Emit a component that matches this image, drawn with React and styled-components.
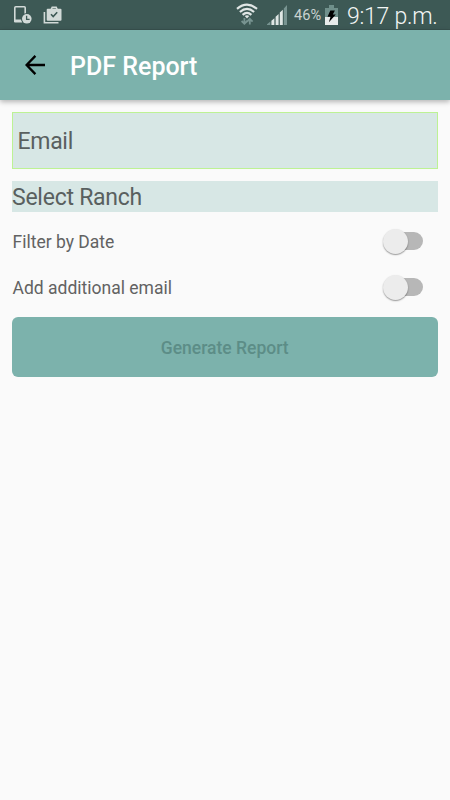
import React, { useState } from "react";
import styled, { createGlobalStyle } from "styled-components";

export default function App() {
  const [filterByDate, setFilterByDate] = useState(false);
  const [additionalEmail, setAdditionalEmail] = useState(false);

  return (
    <>
      <GlobalStyle />
      <Screen>
        <StatusBar />
        <AppBar>
          <BackButton aria-label="Back">
            <svg width="20" height="20" viewBox="0 0 20 20" fill="none" stroke="#000" strokeWidth="2.3">
              <path d="M20 10H2M10.4 0.9L1.6 10l8.8 9.1" />
            </svg>
          </BackButton>
          <Title>PDF Report</Title>
        </AppBar>
        <Form>
          <EmailInput placeholder="Email" />
          <Picker>Select Ranch</Picker>
          <SwitchRow label="Filter by Date" on={filterByDate} onToggle={() => setFilterByDate(!filterByDate)} />
          <SwitchRow label="Add additional email" on={additionalEmail} onToggle={() => setAdditionalEmail(!additionalEmail)} />
          <SubmitButton disabled>Generate Report</SubmitButton>
        </Form>
      </Screen>
    </>
  );
}

function StatusBar() {
  return (
    <StatusContainer>
      <Notifications>
        {/* device with clock */}
        <svg width="19" height="19" viewBox="0 0 19 19">
          <path d="M12.2 8V1.8q0-1-1-1H2.8q-1 0-1 1V16" fill="none" stroke="#d2dad8" strokeWidth="1.6" />
          <path d="M1 13.6h7.4l1 3H2q-1 0-1-1z" fill="#d2dad8" />
          <circle cx="13.8" cy="12.8" r="5.7" fill="#3d5955" />
          <circle cx="13.8" cy="12.8" r="4.8" fill="#d2dad8" />
          <path d="M13.6 9.8v3.5h3" fill="none" stroke="#3d5955" strokeWidth="1.3" />
        </svg>
        {/* briefcase with check */}
        <svg width="19" height="18" viewBox="0 0 19 18">
          <path d="M1.4 6v10.8H15.5" fill="none" stroke="#d2dad8" strokeWidth="1.6" />
          <path d="M8.2 3.5l1-2.1h4l1 2.1" fill="none" stroke="#d2dad8" strokeWidth="1.6" />
          <rect x="3.7" y="2.8" width="14.8" height="12" rx="1" fill="#d2dad8" />
          <path d="M8 8.3l2.2 2.2 4-4.2" fill="none" stroke="#3d5955" strokeWidth="1.6" />
        </svg>
      </Notifications>
      <Indicators>
        {/* wifi */}
        <svg width="22" height="24" viewBox="0 0 22 24">
          <g fill="none" stroke="#e0e6e5" strokeWidth="2.2">
            <path d="M1 5.9Q11-2.5 21 5.9" />
            <path d="M3.9 9Q11 2.9 18.1 9" />
            <path d="M6.6 11.9Q11 8 15.4 11.9" />
          </g>
          <path d="M8.7 13.1q2.3-1.8 4.6 0L11 15.4z" fill="#e0e6e5" />
          <path d="M8.4 15v5.8M5.6 18l2.8 2.8 2.8-2.8M13.8 21.4v-5.6M11 18.6l2.8-2.8 2.8 2.8" fill="none" stroke="#789491" strokeWidth="1.8" />
        </svg>
        {/* signal */}
        <Signal width="20" height="21" viewBox="0 0 20 21">
          <g fill="#dfe6e4">
            <path d="M4.4 15.8l3-2.6V20h-3zM8.6 11.8l3-2.8v11h-3zM12.8 7.6l3-2.8V20h-3z" />
          </g>
          <path d="M0 20v-0.8l3.4-2.8V20zM16.8 3.4L20 0v20h-3.2z" fill="#789491" />
        </Signal>
        <Percent>46%</Percent>
        {/* battery */}
        <Battery width="13" height="20" viewBox="0 0 13 20">
          <path d="M4 0h5v3h4v9H0V3h4z" fill="#70908b" />
          <path d="M0 12h13v8H0z" fill="#e8eceb" />
          <path d="M5.3 5.5h4.6L7.8 9.4h3L3.9 17.3l1.6-5.5H2.5z" fill="#000" />
        </Battery>
        <Time>9:17 p.m.</Time>
      </Indicators>
    </StatusContainer>
  );
}

function SwitchRow({ label, on, onToggle }) {
  return (
    <Row>
      <RowLabel>{label}</RowLabel>
      <Track role="switch" aria-checked={on} aria-label={label} $on={on} onClick={onToggle}>
        <Thumb $on={on} />
      </Track>
    </Row>
  );
}

const GlobalStyle = createGlobalStyle`
  * {
    box-sizing: border-box;
  }
  body {
    margin: 0;
    background-color: #fafafa;
    font-family: Roboto, sans-serif;
  }
`;

const Screen = styled.div`
  display: flex;
  flex-direction: column;
  min-height: 800px;
  background-color: #fafafa;
`;

const StatusContainer = styled.div`
  display: flex;
  justify-content: space-between;
  height: 30px;
  padding: 0 13px 0 13px;
  background-color: #3d5955;
  border-bottom: 1px solid #38514e;
  svg {
    display: block;
    flex-shrink: 0;
  }
`;

const Notifications = styled.div`
  display: flex;
  gap: 11px;
  padding-top: 6px;
`;

const Indicators = styled.div`
  display: flex;
  align-items: flex-start;
  padding-top: 3px;
`;

const Signal = styled.svg`
  margin: 2px 0 0 9px;
`;

const Percent = styled.span`
  margin: 3px 0 0 7px;
  width: 28px;
  font-size: 14.6px;
  line-height: 18px;
  color: #c9d2d0;
`;

const Battery = styled.svg`
  margin: 2px 0 0 3px;
`;

const Time = styled.span`
  margin-left: 9px;
  width: 90px;
  font-size: 23px;
  font-weight: 300;
  line-height: 27px;
  letter-spacing: -0.25px;
  white-space: nowrap;
  color: #f2f5f4;
`;

const AppBar = styled.header`
  display: flex;
  align-items: center;
  height: 70px;
  padding-left: 25px;
  background-color: #7cb2ac;
  box-shadow: 0 2px 5px rgba(0, 0, 0, 0.28);
`;

const BackButton = styled.button`
  display: flex;
  padding: 0;
  border: none;
  background: none;
`;

const Title = styled.h1`
  margin: 3px 0 0 25px;
  font-size: 25px;
  font-weight: 500;
  color: #fff;
`;

const Form = styled.main`
  display: flex;
  flex-direction: column;
  padding: 12px 12.5px 0 12px;
`;

const EmailInput = styled.input`
  height: 57px;
  padding: 1px 5px 0 4.5px;
  border: 1px solid #bdf294;
  border-radius: 0;
  outline: none;
  background-color: #d7e7e5;
  font-family: inherit;
  font-size: 23px;
  letter-spacing: -0.3px;
  color: #555f5e;
  &::placeholder {
    color: #59605f;
    opacity: 1;
  }
`;

const Picker = styled.div`
  height: 31px;
  margin: 12px 0 6px;
  background-color: #d7e7e5;
  font-size: 23px;
  letter-spacing: -0.25px;
  line-height: 34px;
  color: #59605f;
`;

const Row = styled.div`
  display: flex;
  align-items: center;
  justify-content: space-between;
  height: 46px;
  padding-right: 14.5px;
`;

const RowLabel = styled.span`
  padding: 2px 0 0 0.5px;
  font-size: 17.5px;
  color: #626262;
`;

const Track = styled.button`
  display: flex;
  align-items: center;
  width: 36px;
  height: 18px;
  padding: 0;
  border: none;
  border-radius: 9px;
  background-color: ${({ $on }) => ($on ? "#7cb2ac" : "#b7b7b7")};
`;

const Thumb = styled.span`
  flex-shrink: 0;
  width: 25px;
  height: 25px;
  margin-left: ${({ $on }) => ($on ? "16px" : "-4.5px")};
  border-radius: 50%;
  background-color: #ececec;
  box-shadow: 0 1px 1.5px rgba(0, 0, 0, 0.4);
`;

const SubmitButton = styled.button`
  height: 60px;
  margin-top: 7px;
  padding: 2px 0 0;
  border: none;
  border-radius: 6px;
  background-color: #7cb2ac;
  font-family: inherit;
  font-size: 17.5px;
  font-weight: 500;
  color: #5c8d87;
`;
